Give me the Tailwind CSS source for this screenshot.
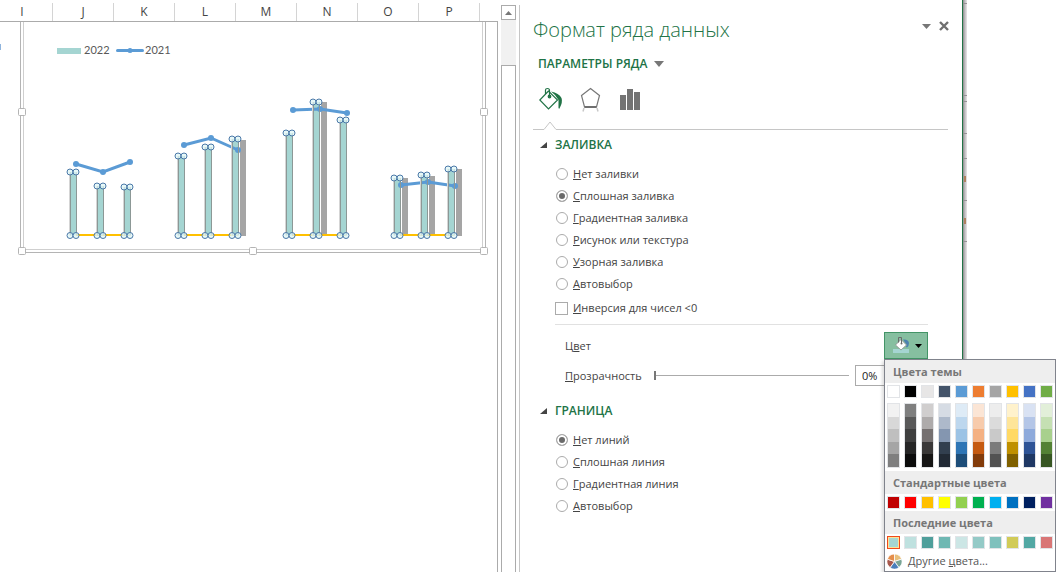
<!DOCTYPE html>
<html lang="ru">
<head>
  <meta charset="UTF-8">
  <meta name="viewport" content="width=device-width, initial-scale=1.0">
  <title>Формат ряда данных</title>
  <script src="https://cdn.jsdelivr.net/npm/@tailwindcss/browser@4"></script>
</head>
<body class="bg-white font-['Open_Sans','Noto_Sans',sans-serif] text-[11px] leading-4 text-[#444]">
  <div class="flex h-screen overflow-hidden">

    <!-- Лист -->
    <main class="flex min-w-0 flex-1">
      <div class="flex min-w-0 flex-1 flex-col">
        <div class="flex h-[22px] shrink-0 items-end overflow-hidden border-b border-[#ababab] text-xs leading-[18px] text-[#444]">
          <div class="w-[53px] shrink-0 border-r border-[#d4d4d4] pr-2 text-center">I</div>
          <div class="w-[61px] shrink-0 border-r border-[#d4d4d4] text-center">J</div>
          <div class="w-[61px] shrink-0 border-r border-[#d4d4d4] text-center">K</div>
          <div class="w-[61px] shrink-0 border-r border-[#d4d4d4] text-center">L</div>
          <div class="w-[61px] shrink-0 border-r border-[#d4d4d4] text-center">M</div>
          <div class="w-[61px] shrink-0 border-r border-[#d4d4d4] text-center">N</div>
          <div class="w-[61px] shrink-0 border-r border-[#d4d4d4] text-center">O</div>
          <div class="w-[61px] shrink-0 border-r border-[#d4d4d4] text-center">P</div>
        </div>
        <div class="min-h-0 flex-1 border-r border-[#ababab]">
          <svg width="490" height="236" viewBox="0 22 490 236" class="block">
            <rect x="0" y="44" width="1" height="6" fill="#8fb4dd"/>
            <!-- рамка диаграммы -->
            <path d="M20.5 22V252.5H485.5V22" fill="none" stroke="#b4b4b4"/>
            <path d="M23.5 22V249.5H482.5V22" fill="none" stroke="#cfcfcf"/>
            <g fill="#fff" stroke="#b4b4b4">
              <rect x="18.5" y="108.5" width="7" height="7" rx="1"/>
              <rect x="480.5" y="108.5" width="7" height="7" rx="1"/>
              <rect x="18.5" y="247.5" width="7" height="7" rx="1"/>
              <rect x="249.5" y="247.5" width="7" height="7" rx="1"/>
              <rect x="480.5" y="247.5" width="7" height="7" rx="1"/>
            </g>
            <!-- легенда -->
            <rect x="57" y="48" width="24" height="6" fill="#a5d5d2"/>
            <path d="M117.500 50.500H142.500" stroke="#5b9bd5" stroke-width="3" stroke-linecap="round"/>
            <circle cx="130" cy="50.500" r="2.500" fill="#5b9bd5"/>
            <g class="font-[Lato,sans-serif] text-[11px]" fill="#595959">
              <text x="84" y="54">2022</text>
              <text x="145" y="54">2021</text>
            </g>
            <g id="plot"></g>
          </svg>
        </div>
      </div>
      <!-- полоса прокрутки -->
      <div class="mt-[5px] ml-[3px] flex w-[19px] shrink-0 flex-col border-r border-[#c6c6c6] pr-[3px]">
        <button aria-label="Вверх" class="flex h-[15px] shrink-0 items-center justify-center border border-[#ababab] bg-white">
          <svg width="7" height="4" viewBox="0 0 7 4"><path d="M0 4L3.500 0L7 4Z" fill="#777"/></svg>
        </button>
        <div class="h-[45px] shrink-0 bg-[#f1f1f1]"></div>
        <div class="flex-1 border border-b-0 border-[#ababab] bg-white"></div>
      </div>
    </main>

    <!-- Панель формата -->
    <aside class="flex w-[443px] shrink-0 flex-col border-r border-[#217346] pl-[13px] pr-[14px]">
      <div class="flex items-start pt-4">
        <h1 class="flex-1 text-xl leading-7 font-light text-[#217346]">Формат ряда данных</h1>
        <button aria-label="Параметры области задач" class="mt-2 mr-2"><svg width="9" height="5" viewBox="0 0 9 5"><path d="M0 0H9L4.500 5Z" fill="#777"/></svg></button>
        <button aria-label="Закрыть" class="mt-[5px] -mr-px"><svg width="10" height="10" viewBox="0 0 10 10"><path d="M1 1L9 9M9 1L1 9" stroke="#6f6f6f" stroke-width="2.400"/></svg></button>
      </div>
      <button class="mt-[10px] ml-[5px] flex h-5 items-center gap-[7px] self-start text-xs font-semibold text-[#217346]">
        ПАРАМЕТРЫ РЯДА
        <svg width="10" height="6" viewBox="0 0 10 6"><path d="M0 0H10L5 6Z" fill="#777"/></svg>
      </button>

      <div class="mt-[13px] ml-[6px] flex h-[25px] items-start">
        <button aria-label="Заливка и границы" class="w-[41px]">
          <svg width="24" height="24" viewBox="0 0 24 24" fill="none" stroke="#217346" stroke-width="1.200">
            <path d="M9.500 4L0.800 13L9.500 22L18.500 13Z"/>
            <path d="M6.500 7V3Q6.500 1.500 8.500 1.500Q10.500 1.500 10.500 3.500V9"/>
            <circle cx="10.500" cy="9.500" r="1.300" fill="#217346"/>
            <path d="M12 4.500Q20 6 22.500 11Q24 15 20.500 21.500Q20 22 19.500 21V13Q17 8 12 4.500Z" fill="#217346" stroke="none"/>
          </svg>
        </button>
        <button aria-label="Эффекты" class="w-10">
          <svg width="22" height="25" viewBox="0 0 22 25" fill="none">
            <path d="M10.500 1.500L19.500 8.500L16.500 20H4.500L1.500 8.500Z" stroke="#777" stroke-width="1.200"/>
            <path d="M4.500 20H16.500" stroke="#6f6f6f" stroke-width="2"/>
            <path d="M4 21L3 24.500M17 21L18 24.500" stroke="#c8c8c8" stroke-width="1.500"/>
          </svg>
        </button>
        <button aria-label="Параметры ряда">
          <svg width="20" height="23" viewBox="0 0 20 23" fill="#737373">
            <path d="M0 8H6V23H0ZM7 2H13V23H7ZM14 5H20V23H14Z"/>
          </svg>
        </button>
      </div>
      <div class="mt-[9px] flex h-[9px] items-end">
        <div class="w-[11px] border-b border-[#c6c6c6]"></div>
        <svg width="12" height="9" viewBox="0 0 12 9" fill="none"><path d="M0 8.500L6 1L12 8.500" stroke="#c6c6c6"/></svg>
        <div class="flex-1 border-b border-[#c6c6c6]"></div>
      </div>

      <section class="mt-[5px] pl-[7px]">
        <h2 class="flex h-5 items-center gap-2 text-xs font-semibold text-[#217346]">
          <svg width="7" height="6" viewBox="0 0 7 6"><path d="M7 0V6H0Z" fill="#444"/></svg>ЗАЛИВКА
        </h2>
        <div class="mt-2 ml-4 flex flex-col">
          <label class="flex h-[22px] items-center gap-[5px]"><input type="radio" name="fill" class="size-3 appearance-none rounded-full border border-[#ababab] checked:bg-[#6a6a6a] checked:shadow-[inset_0_0_0_2px_#fff]"><span><u>Н</u>ет заливки</span></label>
          <label class="flex h-[22px] items-center gap-[5px]"><input type="radio" name="fill" checked class="size-3 appearance-none rounded-full border border-[#ababab] checked:bg-[#6a6a6a] checked:shadow-[inset_0_0_0_2px_#fff]"><span><u>С</u>плошная заливка</span></label>
          <label class="flex h-[22px] items-center gap-[5px]"><input type="radio" name="fill" class="size-3 appearance-none rounded-full border border-[#ababab] checked:bg-[#6a6a6a] checked:shadow-[inset_0_0_0_2px_#fff]"><span><u>Г</u>радиентная заливка</span></label>
          <label class="flex h-[22px] items-center gap-[5px]"><input type="radio" name="fill" class="size-3 appearance-none rounded-full border border-[#ababab] checked:bg-[#6a6a6a] checked:shadow-[inset_0_0_0_2px_#fff]"><span><u>Р</u>исунок или текстура</span></label>
          <label class="flex h-[22px] items-center gap-[5px]"><input type="radio" name="fill" class="size-3 appearance-none rounded-full border border-[#ababab] checked:bg-[#6a6a6a] checked:shadow-[inset_0_0_0_2px_#fff]"><span><u>У</u>зорная заливка</span></label>
          <label class="flex h-[22px] items-center gap-[5px]"><input type="radio" name="fill" class="size-3 appearance-none rounded-full border border-[#ababab] checked:bg-[#6a6a6a] checked:shadow-[inset_0_0_0_2px_#fff]"><span><u>А</u>втовыбор</span></label>
        </div>
        <label class="mt-[3px] ml-[15px] flex h-5 items-center gap-[5px]"><input type="checkbox" class="size-[13px] appearance-none border border-[#ababab] checked:bg-[#6a6a6a]"><span><u>И</u>нверсия для чисел &lt;0</span></label>

        <div class="mt-[6px] mr-5 ml-[15px] border-t border-[#e1e1e1] pt-[7px] pl-[10px]">
          <div class="flex h-[27px] items-center justify-between">
            <span>Ц<u>в</u>ет</span>
            <div class="relative">
              <button aria-label="Цвет заливки" class="flex h-[27px] w-11 items-center gap-[6px] border border-[#439467] bg-[#86bfa0] pl-2">
                <svg width="16" height="17" viewBox="0 0 16 17">
                  <path d="M10 2.500Q15.500 2 16 6Q16 9 14 10.500Q12.500 10 13.500 7.500Z" fill="#4e81b0"/>
                  <path d="M8 2.500L13.500 8L8 13L2.500 8Z" fill="#fff" stroke="#8a8a8a" stroke-width="0.800"/>
                  <path d="M5.500 5.500V0.500H8.500V6.500" fill="none" stroke="#6b6b6b"/>
                  <circle cx="8.500" cy="6.500" r="1" fill="#6b6b6b"/>
                  <path d="M0 12H6.500L8 13.500L9.500 12H16V16H0Z" fill="#a5d5d2"/>
                </svg>
                <svg width="7" height="4" viewBox="0 0 7 4"><path d="M0 0H7L3.500 4Z" fill="#000"/></svg>
              </button>

              <!-- палитра -->
              <div class="absolute top-full left-0 z-10 w-[172px] border border-[#80838c] bg-white pb-px text-[#777] shadow-[-2px_2px_3px_#0002]">
                <div class="h-[23px] bg-[#eee] pl-2 leading-6 font-bold">Цвета темы</div>
                <div id="theme" class="mx-[2px] mt-[2px] flex gap-1"></div>
                <div id="shades" class="mx-[2px] mt-[5px] mb-[3px] flex gap-1"></div>
                <div class="h-[23px] bg-[#eee] pl-2 leading-6 font-bold">Стандартные цвета</div>
                <div id="standard" class="mx-[2px] my-[2px] flex gap-1"></div>
                <div class="h-[23px] bg-[#eee] pl-2 leading-6 font-bold">Последние цвета</div>
                <div id="recent" class="mx-[2px] mt-[2px] flex gap-1"></div>
                <button class="mt-[3px] flex h-[18px] items-center gap-[6px] pl-[2px] text-[#555]">
                  <svg width="15" height="15" viewBox="-7.500 -7.500 15 15" stroke="#fff" stroke-width="0.800">
                    <path d="M0 0L0 -7.500A7.500 7.500 0 0 1 7.130 -2.320Z" fill="#e8c07c"/>
                    <path d="M0 0L7.130 -2.320A7.500 7.500 0 0 1 4.410 6.070Z" fill="#79a596"/>
                    <path d="M0 0L4.410 6.070A7.500 7.500 0 0 1 -4.410 6.070Z" fill="#4a7ebb"/>
                    <path d="M0 0L-4.410 6.070A7.500 7.500 0 0 1 -7.130 -2.320Z" fill="#a8584c"/>
                    <path d="M0 0L-7.130 -2.320A7.500 7.500 0 0 1 0 -7.500Z" fill="#e58e4a"/>
                  </svg>
                  <span>Другие <u>ц</u>вета...</span>
                </button>
              </div>
            </div>
          </div>
          <div class="mt-[6px] flex h-[21px] items-center">
            <label for="alpha" class="w-[89px]"><u>П</u>розрачность</label>
            <input id="alpha" type="range" value="0" class="h-[9px] min-w-0 flex-1 appearance-none bg-[linear-gradient(#ababab,#ababab)] bg-[length:100%_1px] bg-center bg-no-repeat [&::-webkit-slider-thumb]:h-[9px] [&::-webkit-slider-thumb]:w-[2px] [&::-webkit-slider-thumb]:appearance-none [&::-webkit-slider-thumb]:bg-[#777]">
            <input type="text" value="0%" aria-label="Прозрачность, %" class="ml-[6px] h-[21px] w-[73px] border border-[#ababab] pl-[6px] text-[#222]">
          </div>
        </div>
      </section>

      <section class="mt-[15px] pl-[7px]">
        <h2 class="flex h-5 items-center gap-2 text-xs font-semibold text-[#217346]">
          <svg width="7" height="6" viewBox="0 0 7 6"><path d="M7 0V6H0Z" fill="#444"/></svg>ГРАНИЦА
        </h2>
        <div class="mt-2 ml-4 flex flex-col">
          <label class="flex h-[22px] items-center gap-[5px]"><input type="radio" name="line" checked class="size-3 appearance-none rounded-full border border-[#ababab] checked:bg-[#6a6a6a] checked:shadow-[inset_0_0_0_2px_#fff]"><span><u>Н</u>ет линий</span></label>
          <label class="flex h-[22px] items-center gap-[5px]"><input type="radio" name="line" class="size-3 appearance-none rounded-full border border-[#ababab] checked:bg-[#6a6a6a] checked:shadow-[inset_0_0_0_2px_#fff]"><span><u>С</u>плошная линия</span></label>
          <label class="flex h-[22px] items-center gap-[5px]"><input type="radio" name="line" class="size-3 appearance-none rounded-full border border-[#ababab] checked:bg-[#6a6a6a] checked:shadow-[inset_0_0_0_2px_#fff]"><span><u>Г</u>радиентная линия</span></label>
          <label class="flex h-[22px] items-center gap-[5px]"><input type="radio" name="line" class="size-3 appearance-none rounded-full border border-[#ababab] checked:bg-[#6a6a6a] checked:shadow-[inset_0_0_0_2px_#fff]"><span><u>А</u>втовыбор</span></label>
        </div>
      </section>
    </aside>

    <!-- край окна -->
    <div class="w-[93px] shrink-0">
      <svg width="4" height="572" viewBox="0 0 4 572" class="block h-full" preserveAspectRatio="none">
        <rect width="1" height="572" fill="#9a9a9a"/>
        <rect x="1" width="1" height="572" fill="#b5b2b5"/>
        <rect x="2" width="1" height="572" fill="#cbc8cb"/>
        <rect x="3" width="1" height="572" fill="#dedcde"/>
        <path d="M0 3.500H4M0 95.500H4M0 101.500H4M0 133.500H4M0 158.500H4M0 200.500H4M0 241.500H4" stroke="#969396"/>
        <path d="M1 176H3V182H1ZM1 218H3V224H1Z" fill="#b0805f"/>
      </svg>
    </div>
  </div>

  <script>
    // x, верх столбца 2022, верх серого столбца (если есть)
    const bars = [
      [[70, 172], [97, 186], [124, 187]],
      [[178, 156], [205, 147], [232, 139, 140]],
      [[286, 133], [313, 102, 102], [340, 120]],
      [[394, 178, 178], [421, 175, 176], [448, 169, 169]]
    ];
    const lines = [
      [[76, 164], [103, 172], [130, 162]],
      [[184, 145], [211, 138], [238, 150]],
      [[293, 110], [320, 109], [347, 113]],
      [[401, 185], [428, 182], [455, 186]]
    ];
    const base = 235.5;
    let out = '';
    bars.forEach((group, i) => {
      group.forEach(([x, y, g]) => {
        if (g) out += `<rect x="${x + 8}" y="${g}" width="6" height="${base - g + 0.5}" fill="#a5a5a5"/>`;
      });
      const x0 = group[0][0] + 6;
      out += `<rect x="${x0}" y="234" width="54" height="2" fill="#ffc000"/>`;
      group.forEach(([x, y]) => {
        out += `<rect x="${x}" y="${y}" width="6" height="${base - y}" fill="#a5d5d2"/>`;
      });
      out += `<polyline points="${lines[i].join(' ')}" fill="none" stroke="#5b9bd5" stroke-width="3"/>`;
      lines[i].forEach(([x, y]) => { out += `<circle cx="${x}" cy="${y}" r="3" fill="#5b9bd5"/>`; });
      group.forEach(([x, y]) => {
        out += `<path d="M${x + 0.5} ${y}V${base}M${x + 6.5} ${y}V${base}" stroke="#8c9896"/>`;
        out += `<path d="M${x - 0.5} ${y}V${base}" stroke="#d5d5d5"/>`;
        [[x, y], [x + 6, y], [x, base], [x + 6, base]].forEach(([cx, cy]) => {
          out += `<circle cx="${cx}" cy="${cy}" r="3" fill="#dff5f5" fill-opacity="0.75" stroke="#4a78a8"/>`;
        });
      });
    });
    document.getElementById('plot').innerHTML = out;

    const theme = ['#ffffff', '#000000', '#e7e6e6', '#44546a', '#5b9bd5', '#ed7d31', '#a5a5a5', '#ffc000', '#4472c4', '#70ad47'];
    const shades = [
      ['#f2f2f2', '#d8d8d8', '#bfbfbf', '#a5a5a5', '#7f7f7f'],
      ['#7f7f7f', '#595959', '#3f3f3f', '#262626', '#0c0c0c'],
      ['#d0cece', '#aeabab', '#757070', '#3a3838', '#171616'],
      ['#d6dce4', '#adb9ca', '#8496b0', '#323f4f', '#222a35'],
      ['#deebf6', '#bdd7ee', '#9cc3e5', '#2e75b5', '#1e4e79'],
      ['#fbe5d5', '#f7cbac', '#f4b183', '#c55a11', '#833c0b'],
      ['#ededed', '#dbdbdb', '#c9c9c9', '#7b7b7b', '#525252'],
      ['#fff2cc', '#fee599', '#ffd965', '#bf9000', '#7f6000'],
      ['#d9e2f3', '#b4c6e7', '#8eaadb', '#2f5496', '#1f3864'],
      ['#e2efd9', '#c5e0b3', '#a8d08d', '#538135', '#375623']
    ];
    const standard = ['#c00000', '#ff0000', '#ffc000', '#ffff00', '#92d050', '#00b050', '#00b0f0', '#0070c0', '#002060', '#7030a0'];
    const recent = ['#a5d5d2', '#bfe1df', '#4f9f9b', '#6fb8b3', '#cce6e5', '#94cac7', '#7fc1bd', '#d1cb58', '#52a8a4', '#d97676'];

    function fillRow(id, colors, selected) {
      document.getElementById(id).innerHTML = colors.map((c, i) => i === selected
        ? `<button aria-label="${c}" class="size-[13px] border border-[#f04a1c] shadow-[inset_0_0_0_1px_#ffe294]" style="background-color:${c}"></button>`
        : `<button aria-label="${c}" class="size-[13px] border border-[#e2e4e7]" style="background-color:${c}"></button>`).join('');
    }
    fillRow('theme', theme);
    fillRow('standard', standard);
    fillRow('recent', recent, 0);
    document.getElementById('shades').innerHTML = shades.map(col =>
      `<div class="flex h-[65px] w-[13px] flex-col border border-[#e2e4e7]">${col.map(c =>
        `<button aria-label="${c}" class="flex-1" style="background-color:${c}"></button>`).join('')}</div>`).join('');
  </script>
</body>
</html>
